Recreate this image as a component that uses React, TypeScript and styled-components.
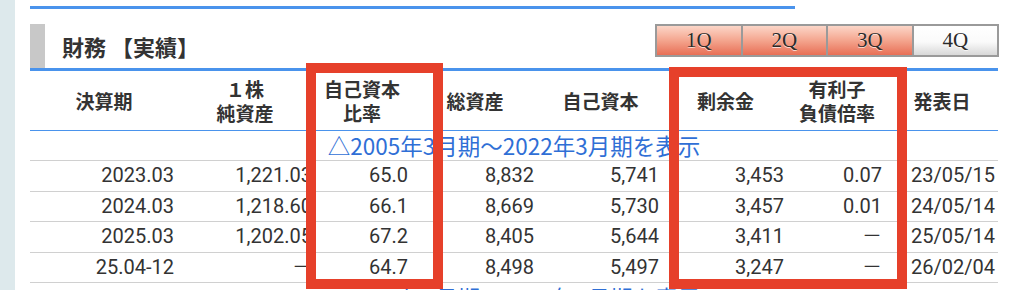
import React from "react";
import styled, {createGlobalStyle} from "styled-components";

const GlobalStyle = createGlobalStyle`
  html, body {
    margin: 0;
    padding: 0;
    background: #ffffff;
  }

  body {
    font-family: Roboto, "Noto Sans CJK JP", sans-serif;
    color: #333333;
  }
`;

const Page = styled.div`
  display: flex;
  height: 290px;
  overflow: hidden;
`;

const SideStrip = styled.div`
  width: 15px;
  flex-shrink: 0;
  background: #dde9ec;
`;

const Main = styled.div`
  position: relative;
  padding-left: 15px;
  width: 968px;
`;

const TopRule = styled.div`
  width: 765px;
  height: 3px;
  margin-top: 6px;
  background: #4a93ec;
`;

const SectionHead = styled.div`
  display: flex;
  align-items: flex-start;
  justify-content: space-between;
  margin-top: 15px;
  height: 44px;
  border-bottom: 3px solid #4a93ec;
`;

const Title = styled.h2`
  display: flex;
  align-items: center;
  gap: 17px;
  margin: 0;
  height: 44px;
  font-size: 22px;
  font-weight: 700;
  color: #333333;
  font-family: "Noto Sans CJK JP", sans-serif;

  &::before {
    content: "";
    width: 15px;
    height: 44px;
    background: #c8c8c8;
  }
`;

const Tabs = styled.div`
  display: flex;
  border: 2px solid #9a9a9a;
  background: #9a9a9a;
  gap: 2px;
  margin-right: -1px;
`;

const Tab = styled.div<{ active?: boolean }>`
  width: 83.5px;
  height: 29px;
  display: flex;
  align-items: center;
  justify-content: center;
  font-family: "Liberation Serif", serif;
  font-size: 21px;
  color: #2a2a2a;
  text-shadow: 0 1px 0 rgba(255, 255, 255, 0.7);
  background: ${props => props.active
          ? "linear-gradient(#ffffff 0%, #fafafa 55%, #d8d8d8 100%)"
          : "linear-gradient(#fcd6c8 0%, #f4a58e 50%, #e86f56 100%)"};
`;

const Table = styled.table`
  width: 968px;
  border-collapse: collapse;
  table-layout: fixed;
`;

const HeadCell = styled.th`
  height: 59px;
  padding: 0;
  font-family: "Noto Sans CJK JP", sans-serif;
  font-size: 19px;
  font-weight: 700;
  line-height: 24px;
  color: #333333;
  text-align: center;
  vertical-align: middle;
  border-bottom: 1px solid #4a93ec;
`;

const LinkCell = styled.td`
  height: 29px;
  padding: 0;
  text-align: center;
  font-family: "Noto Sans CJK JP", sans-serif;
  font-size: 22.5px;
  line-height: 29px;
  color: #2f6fd6;
  border-bottom: 1px solid #d0d0d0;
  white-space: nowrap;
`;

const Cell = styled.td<{ pad?: number }>`
  height: 29.5px;
  padding: 0 ${props => props.pad ?? 4}px 0 0;
  text-align: right;
  font-size: 20px;
  line-height: 29px;
  color: #333333;
  border-bottom: 1px solid #d0d0d0;
  white-space: nowrap;
  overflow: hidden;
`;

const Highlight = styled.div`
  position: absolute;
  border: 10px solid #e6402a;
  box-sizing: border-box;
  pointer-events: none;
`;

const columns = [148, 134, 100, 126, 125, 125, 98, 112];

const headers: string[][] = [
    ["決算期"],
    ["１株", "純資産"],
    ["自己資本", "比率"],
    ["総資産"],
    ["自己資本"],
    ["剰余金"],
    ["有利子", "負債倍率"],
    ["発表日"],
];

const rows: string[][] = [
    ["2023.03", "1,221.03", "65.0", "8,832", "5,741", "3,453", "0.07", "23/05/15"],
    ["2024.03", "1,218.60", "66.1", "8,669", "5,730", "3,457", "0.01", "24/05/14"],
    ["2025.03", "1,202.05", "67.2", "8,405", "5,644", "3,411", "－", "25/05/14"],
    ["25.04-12", "－", "64.7", "8,498", "5,497", "3,247", "－", "26/02/04"],
];

const pads = [4, 0, 4, 4, 4, 4, 4, 3];

const App: React.FC = () => {
    return (
        <Page>
            <GlobalStyle/>
            <SideStrip/>
            <Main>
                <TopRule/>
                <SectionHead>
                    <Title>財務 【実績】</Title>
                    <Tabs>
                        <Tab>1Q</Tab>
                        <Tab>2Q</Tab>
                        <Tab>3Q</Tab>
                        <Tab active>4Q</Tab>
                    </Tabs>
                </SectionHead>
                <Table>
                    <colgroup>
                        {columns.map((w, i) => <col key={i} style={{width: w}}/>)}
                    </colgroup>
                    <thead>
                    <tr>
                        {headers.map((lines, i) => (
                            <HeadCell key={i}>
                                {lines.map((l, j) => <div key={j}>{l}</div>)}
                            </HeadCell>
                        ))}
                    </tr>
                    </thead>
                    <tbody>
                    <tr>
                        <LinkCell colSpan={8}>△2005年3月期～2022年3月期を表示</LinkCell>
                    </tr>
                    {rows.map((row, i) => (
                        <tr key={i}>
                            {row.map((v, j) => <Cell key={j} pad={pads[j]}>{v}</Cell>)}
                        </tr>
                    ))}
                    <tr>
                        <LinkCell colSpan={8}>▽2022年3月期～2023年3月期を表示</LinkCell>
                    </tr>
                    </tbody>
                </Table>
                <Highlight style={{left: 291, top: 63, width: 137, height: 226}}/>
                <Highlight style={{left: 654, top: 67, width: 238, height: 222}}/>
            </Main>
        </Page>
    );
};

export default App;
